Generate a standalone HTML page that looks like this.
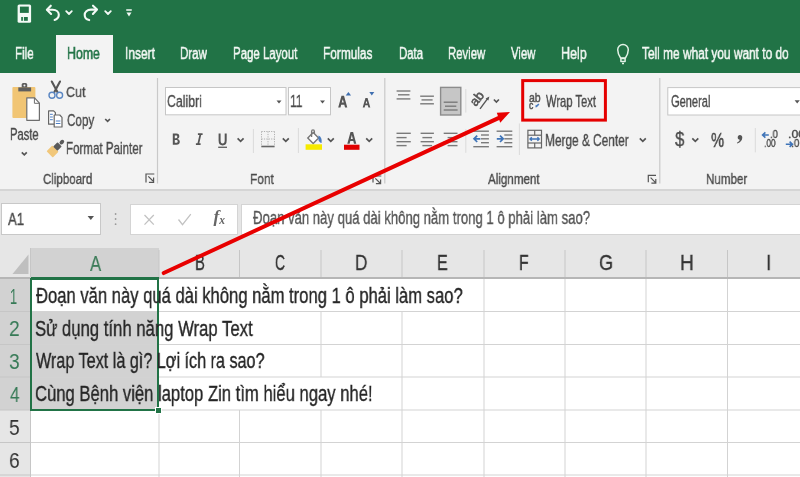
<!DOCTYPE html>
<html><head><meta charset="utf-8">
<style>
*{margin:0;padding:0;box-sizing:border-box}
html,body{width:800px;height:477px;overflow:hidden;background:#fff;font-family:"Liberation Sans",sans-serif}
.a{position:absolute}
.t{position:absolute;white-space:nowrap;transform-origin:0 0;font-family:"Liberation Sans",sans-serif;will-change:transform}
</style></head><body>
<!-- title / tabs -->
<div class="a" style="left:0;top:0;width:800px;height:73px;background:#217346"></div>
<div class="a" style="left:56px;top:35px;width:57px;height:38px;background:#f3f3f3"></div>
<!-- ribbon -->
<div class="a" style="left:0;top:73px;width:800px;height:116px;background:#f3f3f3"></div>
<div class="a" style="left:0;top:189px;width:800px;height:2px;background:#d5d5d5"></div>
<div class="a" style="left:0;top:191px;width:800px;height:57px;background:#e6e6e6"></div>
<!-- formula bar -->
<div class="a" style="left:1px;top:203px;width:100px;height:32px;background:#fff;border:1px solid #c8c8c8"></div>
<div class="a" style="left:130px;top:204px;width:108px;height:31px;background:#fff;border:1px solid #d4d4d4"></div>
<div class="a" style="left:241px;top:204px;width:570px;height:31px;background:#fff;border:1px solid #d4d4d4"></div>
<!-- column headers -->
<div class="a" style="left:0;top:248px;width:800px;height:31px;background:#e6e6e6"></div>
<div class="a" style="left:31px;top:248px;width:128px;height:31px;background:#d2d2d2"></div>
<div class="a" style="left:0;top:277px;width:800px;height:2px;background:#b6b6b6"></div>
<div class="a" style="left:31px;top:277px;width:128px;height:2px;background:#217346"></div>
<!-- row headers -->
<div class="a" style="left:0;top:279px;width:31px;height:198px;background:#e6e6e6"></div>
<div class="a" style="left:0;top:279px;width:31px;height:131px;background:#d2d2d2"></div>
<!-- cell selection bg -->
<div class="a" style="left:31px;top:311px;width:128px;height:99px;background:#d2d2d2"></div>

<svg class="a" style="left:0;top:0;will-change:transform" width="800" height="477" viewBox="0 0 800 477">
<!-- column header dividers -->
<g stroke="#c6c6c6" stroke-width="1">
<line x1="30.5" y1="248" x2="30.5" y2="477"/>
<line x1="159" y1="250" x2="159" y2="277"/>
<line x1="239.5" y1="250" x2="239.5" y2="277"/>
<line x1="321" y1="250" x2="321" y2="277"/>
<line x1="402" y1="250" x2="402" y2="277"/>
<line x1="484" y1="250" x2="484" y2="277"/>
<line x1="565" y1="250" x2="565" y2="277"/>
<line x1="646" y1="250" x2="646" y2="277"/>
<line x1="727.5" y1="250" x2="727.5" y2="277"/>
</g>
<!-- grid -->
<g stroke="#d3d3d3" stroke-width="1">
<line x1="159" y1="410" x2="159" y2="477"/>
<line x1="239.5" y1="410" x2="239.5" y2="477"/>
<line x1="321" y1="311.5" x2="321" y2="377"/>
<line x1="321" y1="410" x2="321" y2="477"/>
<line x1="402" y1="311.5" x2="402" y2="477"/>
<line x1="484" y1="279" x2="484" y2="477"/>
<line x1="565" y1="279" x2="565" y2="477"/>
<line x1="646" y1="279" x2="646" y2="477"/>
<line x1="727.5" y1="279" x2="727.5" y2="477"/>
<line x1="31" y1="311.5" x2="800" y2="311.5"/>
<line x1="31" y1="344.5" x2="800" y2="344.5"/>
<line x1="31" y1="377" x2="800" y2="377"/>
<line x1="31" y1="410" x2="800" y2="410"/>
<line x1="31" y1="442.5" x2="800" y2="442.5"/>
<line x1="31" y1="475" x2="800" y2="475"/>
</g>
<g stroke="#c6c6c6" stroke-width="1">
<line x1="0" y1="311.5" x2="31" y2="311.5"/>
<line x1="0" y1="344.5" x2="31" y2="344.5"/>
<line x1="0" y1="377" x2="31" y2="377"/>
<line x1="0" y1="410" x2="31" y2="410"/>
<line x1="0" y1="442.5" x2="31" y2="442.5"/>
<line x1="0" y1="475" x2="31" y2="475"/>
</g>

<!-- ===== QAT ===== -->
<rect x="17.6" y="4.4" width="13.5" height="18.4" rx="1.6" fill="#f4faf6"/>
<rect x="19.9" y="6.6" width="8.9" height="6.3" fill="#217346"/>
<rect x="21.2" y="17" width="1.7" height="3.8" fill="#217346"/>
<rect x="23.9" y="17" width="3.9" height="3.8" fill="#217346"/>
<g fill="none" stroke="#f4faf6" stroke-width="2.1" stroke-linecap="round" stroke-linejoin="round">
<path d="M50.8,5.7 L46.9,9.8 L51.1,14"/>
<path d="M47.4,9.8 H52.6 C56.5,9.8 58.8,12 58.8,14.8 C58.8,17.3 57,19.2 54.6,19.9"/>
<path d="M93,5.7 L97,9.5 L92.9,14"/>
<path d="M96.4,9.6 H91 C87,9.6 84.7,12.3 84.7,15 C84.7,17.6 86.6,19.5 89.2,20.1"/>
<path d="M66.2,11.2 L69,14 L71.8,11.2" stroke-width="1.8"/>
<path d="M105.2,11.2 L108,14 L110.8,11.2" stroke-width="1.8"/>
<line x1="126.8" y1="10" x2="131.2" y2="10" stroke-width="1.6"/>
</g>
<polygon points="126.5,12.6 131.5,12.6 129,16.4" fill="#f4faf6"/>
<!-- lightbulb -->
<g fill="none" stroke="#e2f2e6" stroke-width="1.5" stroke-linejoin="round">
<path d="M620.6,58 C618.6,55 617.7,52.5 617.7,49.8 A5.3,5.3 0 0 1 628.3,49.8 C628.3,52.5 627.4,55 625.4,58 Z"/>
<path d="M620.9,58.6 H625.1 V61.6 H620.9 Z"/>
<line x1="622" y1="63.4" x2="624" y2="63.4"/>
</g>
<!-- ===== Clipboard ===== -->
<rect x="12.4" y="86.9" width="23" height="31" rx="1" fill="#f1c574"/>
<rect x="18.3" y="87.4" width="12.8" height="4" fill="#5e5e5e"/>
<path d="M21.7,87.6 V84.5 Q21.7,83 23.2,83 H25.7 Q27.2,83 27.2,84.5 V87.6 Z" fill="#5e5e5e"/>
<circle cx="24.45" cy="85.6" r="1" fill="#f3f3f3"/>
<path d="M26.8,97.8 H34.6 L39.4,103.1 V120.3 H26.8 Z" fill="#fff" stroke="#6e6e6e" stroke-width="1.2" stroke-linejoin="round"/>
<path d="M34.4,97.8 V103.3 H39.4" fill="none" stroke="#6e6e6e" stroke-width="1"/>
<path d="M21.8,152.3 L24.3,154.8 L26.8,152.3" fill="none" stroke="#555" stroke-width="1.7"/>
<!-- scissors -->
<g fill="none" stroke-linecap="round">
<path d="M51.8,81.5 L57.4,92 M60,81.5 L54.4,92" stroke="#555" stroke-width="2.1"/>
<circle cx="52" cy="95.3" r="3" stroke="#5a86c2" stroke-width="1.4"/>
<circle cx="59.6" cy="95.3" r="3" stroke="#5a86c2" stroke-width="1.4"/>
</g>
<!-- copy -->
<g stroke="#666" stroke-width="1.2" stroke-linejoin="round">
<path d="M48.6,110.9 H53.6 L55.4,112.7 V124.2 H48.6 Z" fill="#fff"/>
<path d="M54.2,115 H59.8 L62,117.4 V127 H54.2 Z" fill="#fff"/>
</g>
<g stroke="#4d7fc4" stroke-width="1">
<line x1="50" y1="114.3" x2="52.8" y2="114.3"/><line x1="50" y1="117" x2="52.8" y2="117"/><line x1="50" y1="119.7" x2="52.8" y2="119.7"/>
<line x1="55.8" y1="121" x2="60.4" y2="121"/><line x1="55.8" y1="123.5" x2="60.4" y2="123.5"/>
</g>
<path d="M105.2,119 L107.6,121.4 L110,119" fill="none" stroke="#555" stroke-width="1.7"/>
<!-- format painter -->
<g transform="rotate(-45 56 148)">
<rect x="47" y="143.6" width="8.2" height="8.8" rx="0.8" fill="#f1c77a"/>
<rect x="55" y="145" width="6.2" height="6" rx="0.8" fill="#5a5a5a"/>
<ellipse cx="64.3" cy="148" rx="2.6" ry="2" fill="#5a5a5a"/>
</g>
<!-- dialog launchers -->
<g fill="none" stroke="#555" stroke-width="1.2">
<path d="M146,182.5 V174 H154.3"/><path d="M148.3,176.3 L153,181 M153.6,177.6 V182.3 H148.9"/>
<path d="M373,182.5 V176 H381.3"/><path d="M375.3,178.3 L380,183 M380.6,179.6 V183.6 H375.9"/>
<path d="M648.3,182.3 V175.3 H656"/><path d="M650.6,177.6 L655.3,182.3 M655.8,178.9 V183.2 H651.4"/>
</g>
<!-- group separators -->
<g stroke="#c9c9c9" stroke-width="1.2">
<line x1="157.5" y1="78" x2="157.5" y2="183.5"/>
<line x1="384.8" y1="78" x2="384.8" y2="183.5"/>
<line x1="659.8" y1="78" x2="659.8" y2="183.5"/>
</g>
<g stroke="#dadada" stroke-width="1">
<line x1="253.4" y1="129" x2="253.4" y2="153"/>
<line x1="298.4" y1="128" x2="298.4" y2="153"/>
<line x1="465.8" y1="89" x2="465.8" y2="112.6"/>
<line x1="465.8" y1="129.3" x2="465.8" y2="152.8"/>
<line x1="519.4" y1="123.5" x2="519.4" y2="155"/>
<line x1="755.3" y1="128" x2="755.3" y2="152.4"/>
</g>
<!-- ===== Font group ===== -->
<rect x="165.5" y="87.5" width="120.5" height="27.3" fill="#fff" stroke="#c6c6c6" stroke-width="1"/>
<rect x="288.5" y="87.5" width="42" height="27.3" fill="#fff" stroke="#c6c6c6" stroke-width="1"/>
<polygon points="276.5,100.5 281.5,100.5 279,103.6" fill="#555"/>
<polygon points="320,100.5 325,100.5 322.5,103.6" fill="#555"/>
<path d="M338.20,107.60 L341.48,95.70 L344.02,95.70 L347.30,107.60 L345.02,107.60 L344.30,104.74 L341.20,104.74 L340.48,107.60 Z M341.70,102.60 L343.80,102.60 L342.75,99.27 Z M362.70,107.60 L365.44,97.90 L367.56,97.90 L370.30,107.60 L368.40,107.60 L367.79,105.27 L365.21,105.27 L364.60,107.60 Z M365.63,103.53 L367.37,103.53 L366.50,100.81 Z" fill="#555" fill-rule="evenodd"/>
<polygon points="345.7,95.4 351.1,95.4 348.4,92" fill="#3f6fb0"/>
<polygon points="369.3,92 374.3,92 371.8,95.4" fill="#3f6fb0"/>
<!-- B I U -->
<path d="M172.8,133.6 H176.3 C178.6,133.6 179.3,135 179.3,136.3 C179.3,137.6 178.6,138.6 177.2,138.9 C178.9,139.2 179.8,140.2 179.8,141.7 C179.8,143.4 178.7,144.7 176.4,144.7 H172.8 Z M174.8,135.5 V138.2 H176 C177,138.2 177.3,137.6 177.3,136.8 C177.3,136 177,135.5 176,135.5 Z M174.8,140 V142.8 H176.2 C177.3,142.8 177.7,142.2 177.7,141.4 C177.7,140.6 177.3,140 176.2,140 Z" fill="#555" fill-rule="evenodd"/>
<g fill="none" stroke="#555" stroke-width="1.4">
<path d="M197.9,134.1 H202.6 M195.9,144.1 H200.6 M200.5,134.1 L198.2,144.1" stroke-width="1.8"/>
<path d="M219.6,133.6 V140.6 C219.6,143.3 220.9,144.5 222.65,144.5 C224.4,144.5 225.7,143.3 225.7,140.6 V133.6" stroke-width="2"/>
</g>
<line x1="218.2" y1="147.3" x2="227" y2="147.3" stroke="#666" stroke-width="1.4"/>
<g fill="none" stroke="#555" stroke-width="1.7">
<path d="M237.6,138.4 L240.6,141.4 L243.6,138.4"/>
<path d="M282.8,138.4 L285.8,141.4 L288.8,138.4"/>
<path d="M327.8,138.4 L330.8,141.4 L333.8,138.4"/>
<path d="M366.2,138.4 L369.2,141.4 L372.2,138.4"/>
</g>
<!-- borders icon -->
<g stroke="#b0b0b0" stroke-width="1" stroke-dasharray="1.2,1.2" fill="none">
<path d="M261.5,131.5 H274.5 M261.5,139 H274.5 M261.5,131.5 V146 M274.5,131.5 V146 M268,131.5 V146"/>
</g>
<line x1="261.3" y1="146.5" x2="274.6" y2="146.5" stroke="#666" stroke-width="1.6"/>
<!-- fill color -->
<path d="M313.2,132.6 L318.6,138 L313.2,143.4 L307.8,138 Z" fill="#fff" stroke="#777" stroke-width="1.4"/>
<path d="M311.6,137 V131.4 Q311.6,129.8 313,129.8 Q314.4,129.8 314.4,131.4 V134" fill="none" stroke="#777" stroke-width="1.3"/>
<path d="M318.4,135.6 C321.2,136.6 322,139.2 321.6,143 C320.2,142.6 319,141.6 318.6,140.4 Z" fill="#4a7cbf"/>
<rect x="305.6" y="144.3" width="16.4" height="5.5" fill="#f6ea00"/>
<!-- font color A -->
<path d="M347.3,143.7 L350.5,132 H353.1 L356.3,143.7 H354 L353.3,141 H350.3 L349.6,143.7 Z M350.8,139 H352.8 L351.8,135 Z" fill="#555" fill-rule="evenodd"/>
<rect x="344" y="144.7" width="15.5" height="5.1" fill="#e10000"/>
<!-- ===== Alignment ===== -->
<g stroke="#7a7a7a" stroke-width="1.4">
<line x1="396.6" y1="91" x2="410.4" y2="91"/><line x1="398" y1="94.8" x2="409.5" y2="94.8"/><line x1="396.6" y1="98.9" x2="410.4" y2="98.9"/>
<line x1="420.2" y1="96.2" x2="433.9" y2="96.2"/><line x1="421.5" y1="99.9" x2="432.6" y2="99.9"/><line x1="420.2" y1="103.8" x2="433.9" y2="103.8"/>
</g>
<rect x="440.6" y="87.4" width="20.2" height="27.6" fill="#c6c6c6" stroke="#8c8c8c" stroke-width="1.4"/>
<g stroke="#7a7a7a" stroke-width="1.4">
<line x1="443.7" y1="102.2" x2="457.6" y2="102.2"/><line x1="445" y1="106.2" x2="456.3" y2="106.2"/><line x1="443.7" y1="110" x2="457.6" y2="110"/>
</g>
<!-- orientation -->
<text x="0" y="0" transform="translate(480.3,101.2) rotate(-52)" font-family="Liberation Sans" font-size="13" fill="#555" stroke="#555" stroke-width="0.6" text-anchor="middle">ab</text>
<path d="M480,108.8 L487.8,98.4" stroke="#555" stroke-width="1.4"/>
<polygon points="489.4,96.4 485.6,98.6 488.4,100.6" fill="#555"/>
<path d="M493.9,99.5 L496.4,102 L498.9,99.5" fill="none" stroke="#555" stroke-width="1.7"/>
<!-- left/center/right align -->
<g stroke="#7a7a7a" stroke-width="1.4">
<line x1="396.5" y1="133.3" x2="410.8" y2="133.3"/><line x1="396.5" y1="137.6" x2="406.6" y2="137.6"/><line x1="396.5" y1="141.7" x2="410.8" y2="141.7"/><line x1="396.5" y1="145.6" x2="406.6" y2="145.6"/>
<line x1="420.6" y1="133.3" x2="433.9" y2="133.3"/><line x1="422.4" y1="137.6" x2="432.1" y2="137.6"/><line x1="420.6" y1="141.7" x2="433.9" y2="141.7"/><line x1="422.4" y1="145.6" x2="432.1" y2="145.6"/>
<line x1="443.7" y1="133.3" x2="457.5" y2="133.3"/><line x1="447.6" y1="137.6" x2="457.5" y2="137.6"/><line x1="443.7" y1="141.7" x2="457.5" y2="141.7"/><line x1="447.6" y1="145.6" x2="457.5" y2="145.6"/>
<line x1="473.3" y1="131.2" x2="488.9" y2="131.2"/><line x1="481" y1="135" x2="488.9" y2="135"/><line x1="481" y1="138.8" x2="488.9" y2="138.8"/><line x1="481" y1="142.7" x2="488.9" y2="142.7"/><line x1="473.3" y1="146.7" x2="488.9" y2="146.7"/>
<line x1="496.6" y1="131.2" x2="512.3" y2="131.2"/><line x1="504.3" y1="135" x2="512.3" y2="135"/><line x1="504.3" y1="138.8" x2="512.3" y2="138.8"/><line x1="504.3" y1="142.7" x2="512.3" y2="142.7"/><line x1="496.6" y1="146.7" x2="512.3" y2="146.7"/>
</g>
<g stroke="#3f74b8" stroke-width="1.7" fill="none">
<path d="M474,138.8 H480.4 M477.2,135.6 L474,138.8 L477.2,142"/>
<path d="M496.8,138.8 H503.2 M500,135.6 L503.2,138.8 L500,142"/>
</g>
<!-- wrap text icon -->
<text x="528.9" y="101.6" font-family="Liberation Sans" font-size="13.4" fill="#555" stroke="#555" stroke-width="0.5" textLength="11.7" lengthAdjust="spacingAndGlyphs">ab</text>
<text x="529" y="109.2" font-family="Liberation Sans" font-size="11" fill="#555" stroke="#555" stroke-width="0.5" textLength="4.3" lengthAdjust="spacingAndGlyphs">c</text>
<path d="M535.9,106.6 L538.9,104.2" stroke="#4a7cbf" stroke-width="1.6"/>
<polygon points="535.6,107.4 535.8,104.8 537.6,106.8" fill="#4a7cbf"/>
<!-- red box -->
<rect x="522.7" y="80.6" width="82.7" height="39.5" fill="none" stroke="#e50000" stroke-width="3"/>
<!-- merge icon -->
<g fill="none" stroke="#666" stroke-width="1.2">
<rect x="527.9" y="130.3" width="13.6" height="17.6"/>
<line x1="527.9" y1="135.2" x2="541.5" y2="135.2"/><line x1="527.9" y1="143" x2="541.5" y2="143"/>
<line x1="534.7" y1="130.3" x2="534.7" y2="135.2"/><line x1="534.7" y1="143" x2="534.7" y2="147.9"/>
</g>
<g stroke="#3f74b8" stroke-width="1.4" fill="none">
<path d="M530,139 H539.2 M531.8,137.2 L530,139 L531.8,140.8 M537.4,137.2 L539.2,139 L537.4,140.8"/>
</g>
<path d="M639.8,138.4 L642.8,141.4 L645.8,138.4" fill="none" stroke="#555" stroke-width="1.7"/>
<!-- ===== Number ===== -->
<rect x="667.8" y="87.6" width="140" height="27.4" fill="#fff" stroke="#c6c6c6" stroke-width="1"/>
<polygon points="794.6,100.3 799.8,100.3 797.2,103.4" fill="#555"/>
<path d="M692.3,138.3 L695.3,141.3 L698.3,138.3" fill="none" stroke="#555" stroke-width="1.7"/>
<path d="M739.9,135 C741.4,135 742.3,136 742.3,137.6 C742.3,140.3 740.6,142.4 737.3,143.5 L736.9,142.7 C738.7,141.8 739.6,140.7 739.8,139.7 C738.6,139.6 737.7,138.7 737.7,137.4 C737.7,136 738.6,135 739.9,135 Z" fill="#555"/>
<!-- fx -->
<text x="213.4" y="222.2" font-family="Liberation Serif" font-style="italic" font-weight="bold" font-size="17.5" fill="#666">f</text><text x="219.3" y="223.8" font-family="Liberation Serif" font-style="italic" font-weight="bold" font-size="11.5" fill="#666">x</text>
<g stroke="#3f74b8" stroke-width="1.6" fill="none">
<path d="M762.6,135 H768.8 M765.4,132.4 L762.6,135 L765.4,137.6"/>
<path d="M785.8,144.2 H792.2 M789.6,141.6 L792.4,144.2 L789.6,146.8"/>
</g>
<!-- ===== formula bar ===== -->
<polygon points="87.6,216 94,216 90.8,220" fill="#555"/>
<g fill="#9a9a9a"><circle cx="115.6" cy="214" r="0.9"/><circle cx="115.6" cy="219" r="0.9"/><circle cx="115.6" cy="224.2" r="0.9"/></g>
<g stroke="#c2c2c2" stroke-width="1.3" fill="none">
<path d="M144.5,215 L153.8,224.6 M153.8,215 L144.5,224.6"/>
<path d="M178.5,219.5 L182.5,224.6 L190.8,214.2"/>
</g>

<!-- corner triangle -->
<polygon points="12.5,274 28.5,274 28.5,254.5" fill="#bfbfbf"/>
<!-- selection border -->
<rect x="31" y="279" width="127" height="131" fill="none" stroke="#217346" stroke-width="2"/>
<line x1="31" y1="279" x2="31" y2="410" stroke="#217346" stroke-width="2"/>
<rect x="155.5" y="407.5" width="6" height="6" fill="#217346" stroke="#fff" stroke-width="1"/>
<!-- row header green right border -->
<line x1="31" y1="279" x2="31" y2="410" stroke="#217346" stroke-width="2"/>
</svg>
<div class="t" style="left:15.27px;top:45.50px;font-size:15.94px;line-height:15.94px;color:#f2f7f3;font-weight:normal;transform:scaleX(0.7298);-webkit-text-stroke:0.55px currentColor;">File</div>
<div class="t" style="left:67.22px;top:45.60px;font-size:15.80px;line-height:15.80px;color:#217346;font-weight:normal;transform:scaleX(0.7805);-webkit-text-stroke:0.55px currentColor;">Home</div>
<div class="t" style="left:125.17px;top:45.50px;font-size:15.94px;line-height:15.94px;color:#f2f7f3;font-weight:normal;transform:scaleX(0.7504);-webkit-text-stroke:0.55px currentColor;">Insert</div>
<div class="t" style="left:180.20px;top:45.50px;font-size:15.94px;line-height:15.94px;color:#f2f7f3;font-weight:normal;transform:scaleX(0.7232);-webkit-text-stroke:0.55px currentColor;">Draw</div>
<div class="t" style="left:233.28px;top:45.50px;font-size:15.94px;line-height:15.94px;color:#f2f7f3;font-weight:normal;transform:scaleX(0.7191);-webkit-text-stroke:0.55px currentColor;">Page Layout</div>
<div class="t" style="left:323.38px;top:45.50px;font-size:15.94px;line-height:15.94px;color:#f2f7f3;font-weight:normal;transform:scaleX(0.7448);-webkit-text-stroke:0.55px currentColor;">Formulas</div>
<div class="t" style="left:398.75px;top:45.50px;font-size:15.94px;line-height:15.94px;color:#f2f7f3;font-weight:normal;transform:scaleX(0.7145);-webkit-text-stroke:0.55px currentColor;">Data</div>
<div class="t" style="left:448.29px;top:45.50px;font-size:15.94px;line-height:15.94px;color:#f2f7f3;font-weight:normal;transform:scaleX(0.7121);-webkit-text-stroke:0.55px currentColor;">Review</div>
<div class="t" style="left:511.15px;top:45.50px;font-size:15.94px;line-height:15.94px;color:#f2f7f3;font-weight:normal;transform:scaleX(0.7118);-webkit-text-stroke:0.55px currentColor;">View</div>
<div class="t" style="left:561.22px;top:45.50px;font-size:15.94px;line-height:15.94px;color:#f2f7f3;font-weight:normal;transform:scaleX(0.7849);-webkit-text-stroke:0.55px currentColor;">Help</div>
<div class="t" style="left:642.12px;top:45.50px;font-size:15.94px;line-height:15.94px;color:#f2f7f3;font-weight:normal;transform:scaleX(0.7459);-webkit-text-stroke:0.55px currentColor;">Tell me what you want to do</div>
<div class="t" style="left:10.40px;top:127.15px;font-size:16.52px;line-height:16.52px;color:#4a4a4a;font-weight:normal;transform:scaleX(0.6763);-webkit-text-stroke:0.35px currentColor;">Paste</div>
<div class="t" style="left:65.72px;top:83.91px;font-size:15.36px;line-height:15.36px;color:#4a4a4a;font-weight:normal;transform:scaleX(0.8131);-webkit-text-stroke:0.35px currentColor;">Cut</div>
<div class="t" style="left:66.74px;top:113.31px;font-size:15.65px;line-height:15.65px;color:#4a4a4a;font-weight:normal;transform:scaleX(0.7449);-webkit-text-stroke:0.35px currentColor;">Copy</div>
<div class="t" style="left:66.04px;top:140.30px;font-size:16.38px;line-height:16.38px;color:#4a4a4a;font-weight:normal;transform:scaleX(0.7075);-webkit-text-stroke:0.35px currentColor;">Format Painter</div>
<div class="t" style="left:43.44px;top:171.78px;font-size:14.64px;line-height:14.64px;color:#4a4a4a;font-weight:normal;transform:scaleX(0.7872);-webkit-text-stroke:0.35px currentColor;">Clipboard</div>
<div class="t" style="left:167.39px;top:93.75px;font-size:16.52px;line-height:16.52px;color:#4a4a4a;font-weight:normal;transform:scaleX(0.7446);-webkit-text-stroke:0.35px currentColor;">Calibri</div>
<div class="t" style="left:290.39px;top:93.75px;font-size:16.52px;line-height:16.52px;color:#4a4a4a;font-weight:normal;transform:scaleX(0.7235);-webkit-text-stroke:0.35px currentColor;">11</div>
<div class="t" style="left:250.23px;top:171.11px;font-size:15.36px;line-height:15.36px;color:#4a4a4a;font-weight:normal;transform:scaleX(0.7737);-webkit-text-stroke:0.35px currentColor;">Font</div>
<div class="t" style="left:546.16px;top:93.10px;font-size:16.38px;line-height:16.38px;color:#4a4a4a;font-weight:normal;transform:scaleX(0.6837);-webkit-text-stroke:0.35px currentColor;">Wrap Text</div>
<div class="t" style="left:545.41px;top:132.10px;font-size:16.38px;line-height:16.38px;color:#4a4a4a;font-weight:normal;transform:scaleX(0.7246);-webkit-text-stroke:0.35px currentColor;">Merge & Center</div>
<div class="t" style="left:487.93px;top:171.11px;font-size:15.36px;line-height:15.36px;color:#4a4a4a;font-weight:normal;transform:scaleX(0.7552);-webkit-text-stroke:0.35px currentColor;">Alignment</div>
<div class="t" style="left:670.81px;top:93.71px;font-size:15.65px;line-height:15.65px;color:#4a4a4a;font-weight:normal;transform:scaleX(0.7075);-webkit-text-stroke:0.35px currentColor;">General</div>
<div class="t" style="left:706.44px;top:171.78px;font-size:14.64px;line-height:14.64px;color:#4a4a4a;font-weight:normal;transform:scaleX(0.7924);-webkit-text-stroke:0.35px currentColor;">Number</div>
<div class="t" style="left:674.86px;top:129.07px;font-size:20.43px;line-height:20.43px;color:#4a4a4a;font-weight:normal;transform:scaleX(0.8314);-webkit-text-stroke:0.35px currentColor;">$</div>
<div class="t" style="left:711.29px;top:130.24px;font-size:20.00px;line-height:20.00px;color:#4a4a4a;font-weight:normal;transform:scaleX(0.7365);-webkit-text-stroke:0.5px currentColor;">%</div>
<div class="t" style="left:769.53px;top:129.01px;font-size:10.87px;line-height:10.87px;color:#4a4a4a;font-weight:normal;transform:scaleX(0.8682);-webkit-text-stroke:0.35px currentColor;">.0</div>
<div class="t" style="left:763.64px;top:138.04px;font-size:11.30px;line-height:11.30px;color:#4a4a4a;font-weight:normal;transform:scaleX(0.7333);-webkit-text-stroke:0.35px currentColor;">.00</div>
<div class="t" style="left:787.53px;top:129.01px;font-size:10.87px;line-height:10.87px;color:#4a4a4a;font-weight:normal;transform:scaleX(1.1299);-webkit-text-stroke:0.35px currentColor;">.00</div>
<div class="t" style="left:791.35px;top:138.04px;font-size:11.30px;line-height:11.30px;color:#4a4a4a;font-weight:normal;transform:scaleX(0.8917);-webkit-text-stroke:0.35px currentColor;">.0</div>
<div class="t" style="left:7.87px;top:212.26px;font-size:15.72px;line-height:15.72px;color:#4a4a4a;font-weight:normal;transform:scaleX(0.8378);-webkit-text-stroke:0.35px currentColor;">A1</div>
<div class="t" style="left:253.25px;top:210.44px;font-size:17.53px;line-height:17.53px;color:#555555;font-weight:normal;transform:scaleX(0.7491);-webkit-text-stroke:0.35px currentColor;">Đoạn văn này quá dài không nằm trong 1 ô phải làm sao?</div>
<div class="t" style="left:90.00px;top:253.83px;font-size:21.38px;line-height:21.38px;color:#3a7b57;font-weight:normal;transform:scaleX(0.7857);-webkit-text-stroke:0.15px currentColor;">A</div>
<div class="t" style="left:194.77px;top:253.07px;font-size:21.38px;line-height:21.38px;color:#333333;font-weight:normal;transform:scaleX(0.6920);-webkit-text-stroke:0.35px currentColor;">B</div>
<div class="t" style="left:275.35px;top:253.07px;font-size:21.38px;line-height:21.38px;color:#333333;font-weight:normal;transform:scaleX(0.6509);-webkit-text-stroke:0.35px currentColor;">C</div>
<div class="t" style="left:355.10px;top:253.07px;font-size:21.38px;line-height:21.38px;color:#333333;font-weight:normal;transform:scaleX(0.8067);-webkit-text-stroke:0.35px currentColor;">D</div>
<div class="t" style="left:437.29px;top:253.07px;font-size:21.38px;line-height:21.38px;color:#333333;font-weight:normal;transform:scaleX(0.7516);-webkit-text-stroke:0.35px currentColor;">E</div>
<div class="t" style="left:519.27px;top:253.07px;font-size:21.38px;line-height:21.38px;color:#333333;font-weight:normal;transform:scaleX(0.7273);-webkit-text-stroke:0.35px currentColor;">F</div>
<div class="t" style="left:599.16px;top:253.07px;font-size:21.38px;line-height:21.38px;color:#333333;font-weight:normal;transform:scaleX(0.8446);-webkit-text-stroke:0.35px currentColor;">G</div>
<div class="t" style="left:680.06px;top:253.07px;font-size:21.38px;line-height:21.38px;color:#333333;font-weight:normal;transform:scaleX(0.8979);-webkit-text-stroke:0.35px currentColor;">H</div>
<div class="t" style="left:765.65px;top:253.07px;font-size:21.38px;line-height:21.38px;color:#333333;font-weight:normal;transform:scaleX(0.9000);-webkit-text-stroke:0.35px currentColor;">I</div>
<div class="t" style="left:9.90px;top:285.52px;font-size:21.74px;line-height:21.74px;color:#367a56;font-weight:normal;transform:scaleX(0.5896);">1</div>
<div class="t" style="left:8.73px;top:318.32px;font-size:21.74px;line-height:21.74px;color:#367a56;font-weight:normal;transform:scaleX(0.8834);">2</div>
<div class="t" style="left:8.72px;top:351.12px;font-size:21.74px;line-height:21.74px;color:#367a56;font-weight:normal;transform:scaleX(0.8834);">3</div>
<div class="t" style="left:9.75px;top:383.92px;font-size:21.74px;line-height:21.74px;color:#367a56;font-weight:normal;transform:scaleX(0.7951);">4</div>
<div class="t" style="left:8.72px;top:416.72px;font-size:21.74px;line-height:21.74px;color:#333333;font-weight:normal;transform:scaleX(0.8834);">5</div>
<div class="t" style="left:8.72px;top:449.52px;font-size:21.74px;line-height:21.74px;color:#333333;font-weight:normal;transform:scaleX(0.8834);">6</div>
<div class="t" style="left:35.94px;top:284.77px;font-size:21.74px;line-height:21.74px;color:#262626;font-weight:normal;transform:scaleX(0.7644);-webkit-text-stroke:0.35px currentColor;">Đoạn văn này quá dài không nằm trong 1 ô phải làm sao?</div>
<div class="t" style="left:35.17px;top:317.57px;font-size:21.74px;line-height:21.74px;color:#262626;font-weight:normal;transform:scaleX(0.7686);-webkit-text-stroke:0.35px currentColor;">Sử dụng tính năng Wrap Text</div>
<div class="t" style="left:35.93px;top:350.37px;font-size:21.74px;line-height:21.74px;color:#262626;font-weight:normal;transform:scaleX(0.7443);-webkit-text-stroke:0.35px currentColor;">Wrap Text là gì? Lợi ích ra sao?</div>
<div class="t" style="left:35.18px;top:383.17px;font-size:21.74px;line-height:21.74px;color:#262626;font-weight:normal;transform:scaleX(0.7654);-webkit-text-stroke:0.35px currentColor;">Cùng Bệnh viện laptop Zin tìm hiểu ngay nhé!</div>
<svg class="a" style="left:0;top:0;will-change:transform" width="800" height="477" viewBox="0 0 800 477">
<!-- red arrow -->
<line x1="163.7" y1="273" x2="500" y2="117.3" stroke="#e80000" stroke-width="4.1" stroke-linecap="round"/>
<polygon points="510,112 496.8,112.8 500.2,122.8" fill="#e80000"/>
</svg>
</body></html>
